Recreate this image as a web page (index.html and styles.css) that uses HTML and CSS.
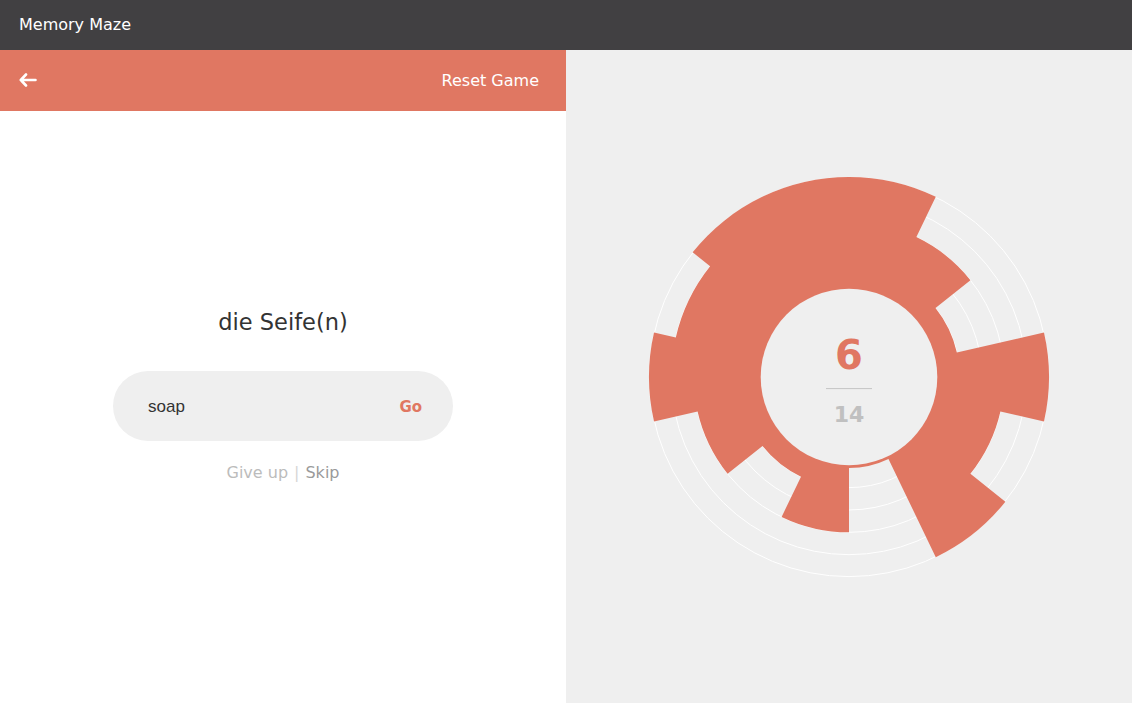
FILE: index.html
```html
<!DOCTYPE html>
<html>
<head>
<meta charset="utf-8">
<link rel="stylesheet" href="styles.css">
</head>
<body>
<div class="topbar">Memory Maze</div>
<div class="main">
  <section class="left">
    <div class="left-header">
      <svg class="back" width="18" height="14" viewBox="0 0 18 14"><path d="M7 1.5 L1.8 7 L7 12.5 M1.8 7 H16.5" fill="none" stroke="#fff" stroke-width="2.6" stroke-linecap="round" stroke-linejoin="round"/></svg>
      <span class="reset">Reset Game</span>
    </div>
    <div class="quiz">
      <div class="word">die Seife(n)</div>
      <div class="answer">
        <span class="answer-text">soap</span>
        <span class="go">Go</span>
      </div>
      <div class="links"><span class="giveup">Give up</span><span class="sep">|</span><span class="skip">Skip</span></div>
    </div>
  </section>
  <section class="right">
    <svg class="chart" width="410" height="410" viewBox="-205 -205 410 410">
      <g fill="none" stroke="#ffffff" stroke-width="1">
        <circle r="110.64"/>
        <circle r="132.98"/>
        <circle r="155.32"/>
        <circle r="177.66"/>
        <circle r="199.6"/>
      </g>
      <path fill="#e07762" d="M0,-200 A200,200 0 0 1 86.78,-180.19 L67.39,-139.94 A155.32,155.32 0 0 1 121.43,-96.84 L86.50,-68.98 A110.64,110.64 0 0 1 107.87,-24.62 L194.99,-44.50 A200,200 0 0 1 194.99,44.50 L151.43,34.56 A155.32,155.32 0 0 1 121.43,96.84 L156.37,124.70 A200,200 0 0 1 86.78,180.19 L39.48,81.99 A91,91 0 0 1 0,91 L0,155.32 A155.32,155.32 0 0 1 -67.39,139.94 L-48.00,99.68 A110.64,110.64 0 0 1 -86.50,68.98 L-121.43,96.84 A155.32,155.32 0 0 1 -151.43,34.56 L-194.99,44.50 A200,200 0 0 1 -194.99,-44.50 L-173.21,-39.53 A177.66,177.66 0 0 1 -138.90,-110.77 L-156.37,-124.70 A200,200 0 0 1 0,-200 Z"/>
      <circle r="88.3" fill="#efefef"/>
      <text class="score" x="0" y="-8.4" text-anchor="middle">6</text>
      <line x1="-23" y1="11.6" x2="23" y2="11.6" stroke="#c4c4c4" stroke-width="1"/>
      <text class="total" x="0" y="45" text-anchor="middle">14</text>
    </svg>
  </section>
</div>
</body>
</html>
```
FILE: styles.css
```css
* { box-sizing: border-box; }
html, body { margin: 0; padding: 0; }
body {
  font-family: "DejaVu Sans", sans-serif;
  width: 1132px;
  height: 703px;
  overflow: hidden;
  background: #fff;
}
.topbar {
  height: 50px;
  background: #414042;
  color: #fff;
  font-size: 16px;
  line-height: 49px;
  padding-left: 19px;
}
.main {
  display: flex;
  height: 653px;
}
.left {
  width: 566px;
  background: #fff;
  display: flex;
  flex-direction: column;
}
.left-header {
  height: 61px;
  background: #e07762;
  display: flex;
  align-items: center;
  justify-content: space-between;
  padding: 0 27px 0 19px;
  color: #fff;
}
.back { display: block; margin-top: -1px; }
.reset { font-size: 16px; margin-top: -1px; }
.quiz {
  display: flex;
  flex-direction: column;
  align-items: center;
  padding-top: 197px;
}
.word {
  font-size: 22.5px;
  line-height: 28px;
  color: #333;
}
.answer {
  margin-top: 35px;
  width: 340px;
  height: 70px;
  border-radius: 35px;
  background: #efefef;
  display: flex;
  align-items: center;
  justify-content: space-between;
  padding: 0 31px 0 35px;
}
.answer-text {
  font-family: "Liberation Sans", Arial, sans-serif;
  font-size: 17px;
  color: #333;
  margin-top: 2px;
}
.go {
  font-size: 15px;
  font-weight: bold;
  color: #e07762;
  margin-top: 2px;
}
.links {
  margin-top: 22px;
  font-size: 16px;
  line-height: 20px;
}
.giveup { color: #bcbcbc; }
.sep { color: #d6d6d6; margin: 0 6px; }
.skip { color: #9a9a9a; }
.right {
  flex: 1;
  background: #efefef;
  display: flex;
  align-items: center;
  justify-content: center;
}
.chart { display: block; }
.score {
  font-family: "DejaVu Sans", sans-serif;
  font-weight: bold;
  font-size: 40px;
  fill: #e07762;
}
.total {
  font-family: "DejaVu Sans", sans-serif;
  font-weight: bold;
  font-size: 22px;
  fill: #c0c0c0;
}
```
